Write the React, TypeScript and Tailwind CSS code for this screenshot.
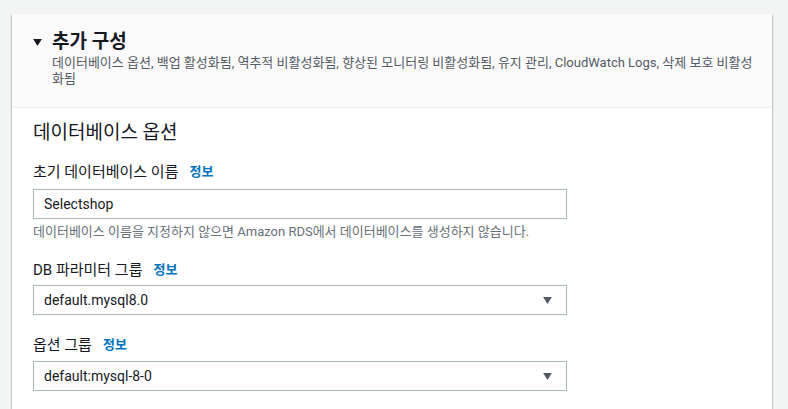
const font = { fontFamily: 'Roboto, "Noto Sans CJK KR", sans-serif' };

function Caret({ className }: { className: string }) {
  return (
    <svg viewBox="0 0 10 8" className={className} aria-hidden="true">
      <path d="M0 0h10L5 8z" fill="currentColor" />
    </svg>
  );
}

function Label({ text }: { text: string }) {
  return (
    <div className="flex items-center leading-5">
      <span className="text-[15px] text-[#16191f]">{text}</span>
      <a className="ml-[11px] text-[13px] font-bold text-[#0073bb]">정보</a>
    </div>
  );
}

function SelectBox({ value, className }: { value: string; className: string }) {
  return (
    <div
      className={`flex h-[30px] w-[534px] items-center justify-between border border-[#aab7b8] bg-white pl-[10px] pr-[14px] ${className}`}
    >
      <span className="text-[14px] text-[#16191f]">{value}</span>
      <Caret className="h-[7px] w-[9px] text-[#545b64]" />
    </div>
  );
}

export default function App() {
  return (
    <div className="h-[409px] overflow-hidden bg-[#f2f3f3] pl-[12px] pr-[16px] pt-[14px]" style={font}>
      <div className="bg-white shadow-[0_1px_1px_0_rgba(0,28,36,0.3),1px_1px_1px_0_rgba(0,28,36,0.15),-1px_1px_1px_0_rgba(0,28,36,0.15)]">
        <div className="border-b border-[#eaeded] bg-[#fafafa] pb-[20px] pl-[21px] pr-[8px] pt-[15px]">
          <div className="flex items-center leading-[26px]">
            <Caret className="mr-[10px] h-[7px] w-[9px] text-[#16191f]" />
            <h2 className="text-[19px] font-bold text-[#16191f]">추가 구성</h2>
          </div>
          <p className="pl-[19px] text-[13px] leading-4 text-[#545b64]">
            데이터베이스 옵션, 백업 활성화됨, 역추적 비활성화됨, 향상된 모니터링 비활성화됨, 유지 관리, CloudWatch Logs, 삭제 보호 비활성
            <br />
            화됨
          </p>
        </div>
        <div className="pb-10 pl-[21px] pr-5 pt-3">
          <h3 className="text-[19px] leading-[26px] text-[#16191f]">데이터베이스 옵션</h3>

          <div className="mt-4">
            <Label text="초기 데이터베이스 이름" />
            <div className="mt-[7px] flex h-[30px] w-[534px] items-center border border-[#aab7b8] bg-white px-[10px]">
              <span className="text-[14px] text-[#16191f]">Selectshop</span>
            </div>
            <p className="mt-[5px] text-[13px] leading-4 text-[#687078]">
              데이터베이스 이름을 지정하지 않으면 Amazon RDS에서 데이터베이스를 생성하지 않습니다.
            </p>
          </div>

          <div className="mt-5">
            <Label text="DB 파라미터 그룹" />
            <SelectBox value="default.mysql8.0" className="mt-[5px]" />
          </div>

          <div className="mt-5">
            <Label text="옵션 그룹" />
            <SelectBox value="default:mysql-8-0" className="mt-[6px]" />
          </div>
        </div>
      </div>
    </div>
  );
}
